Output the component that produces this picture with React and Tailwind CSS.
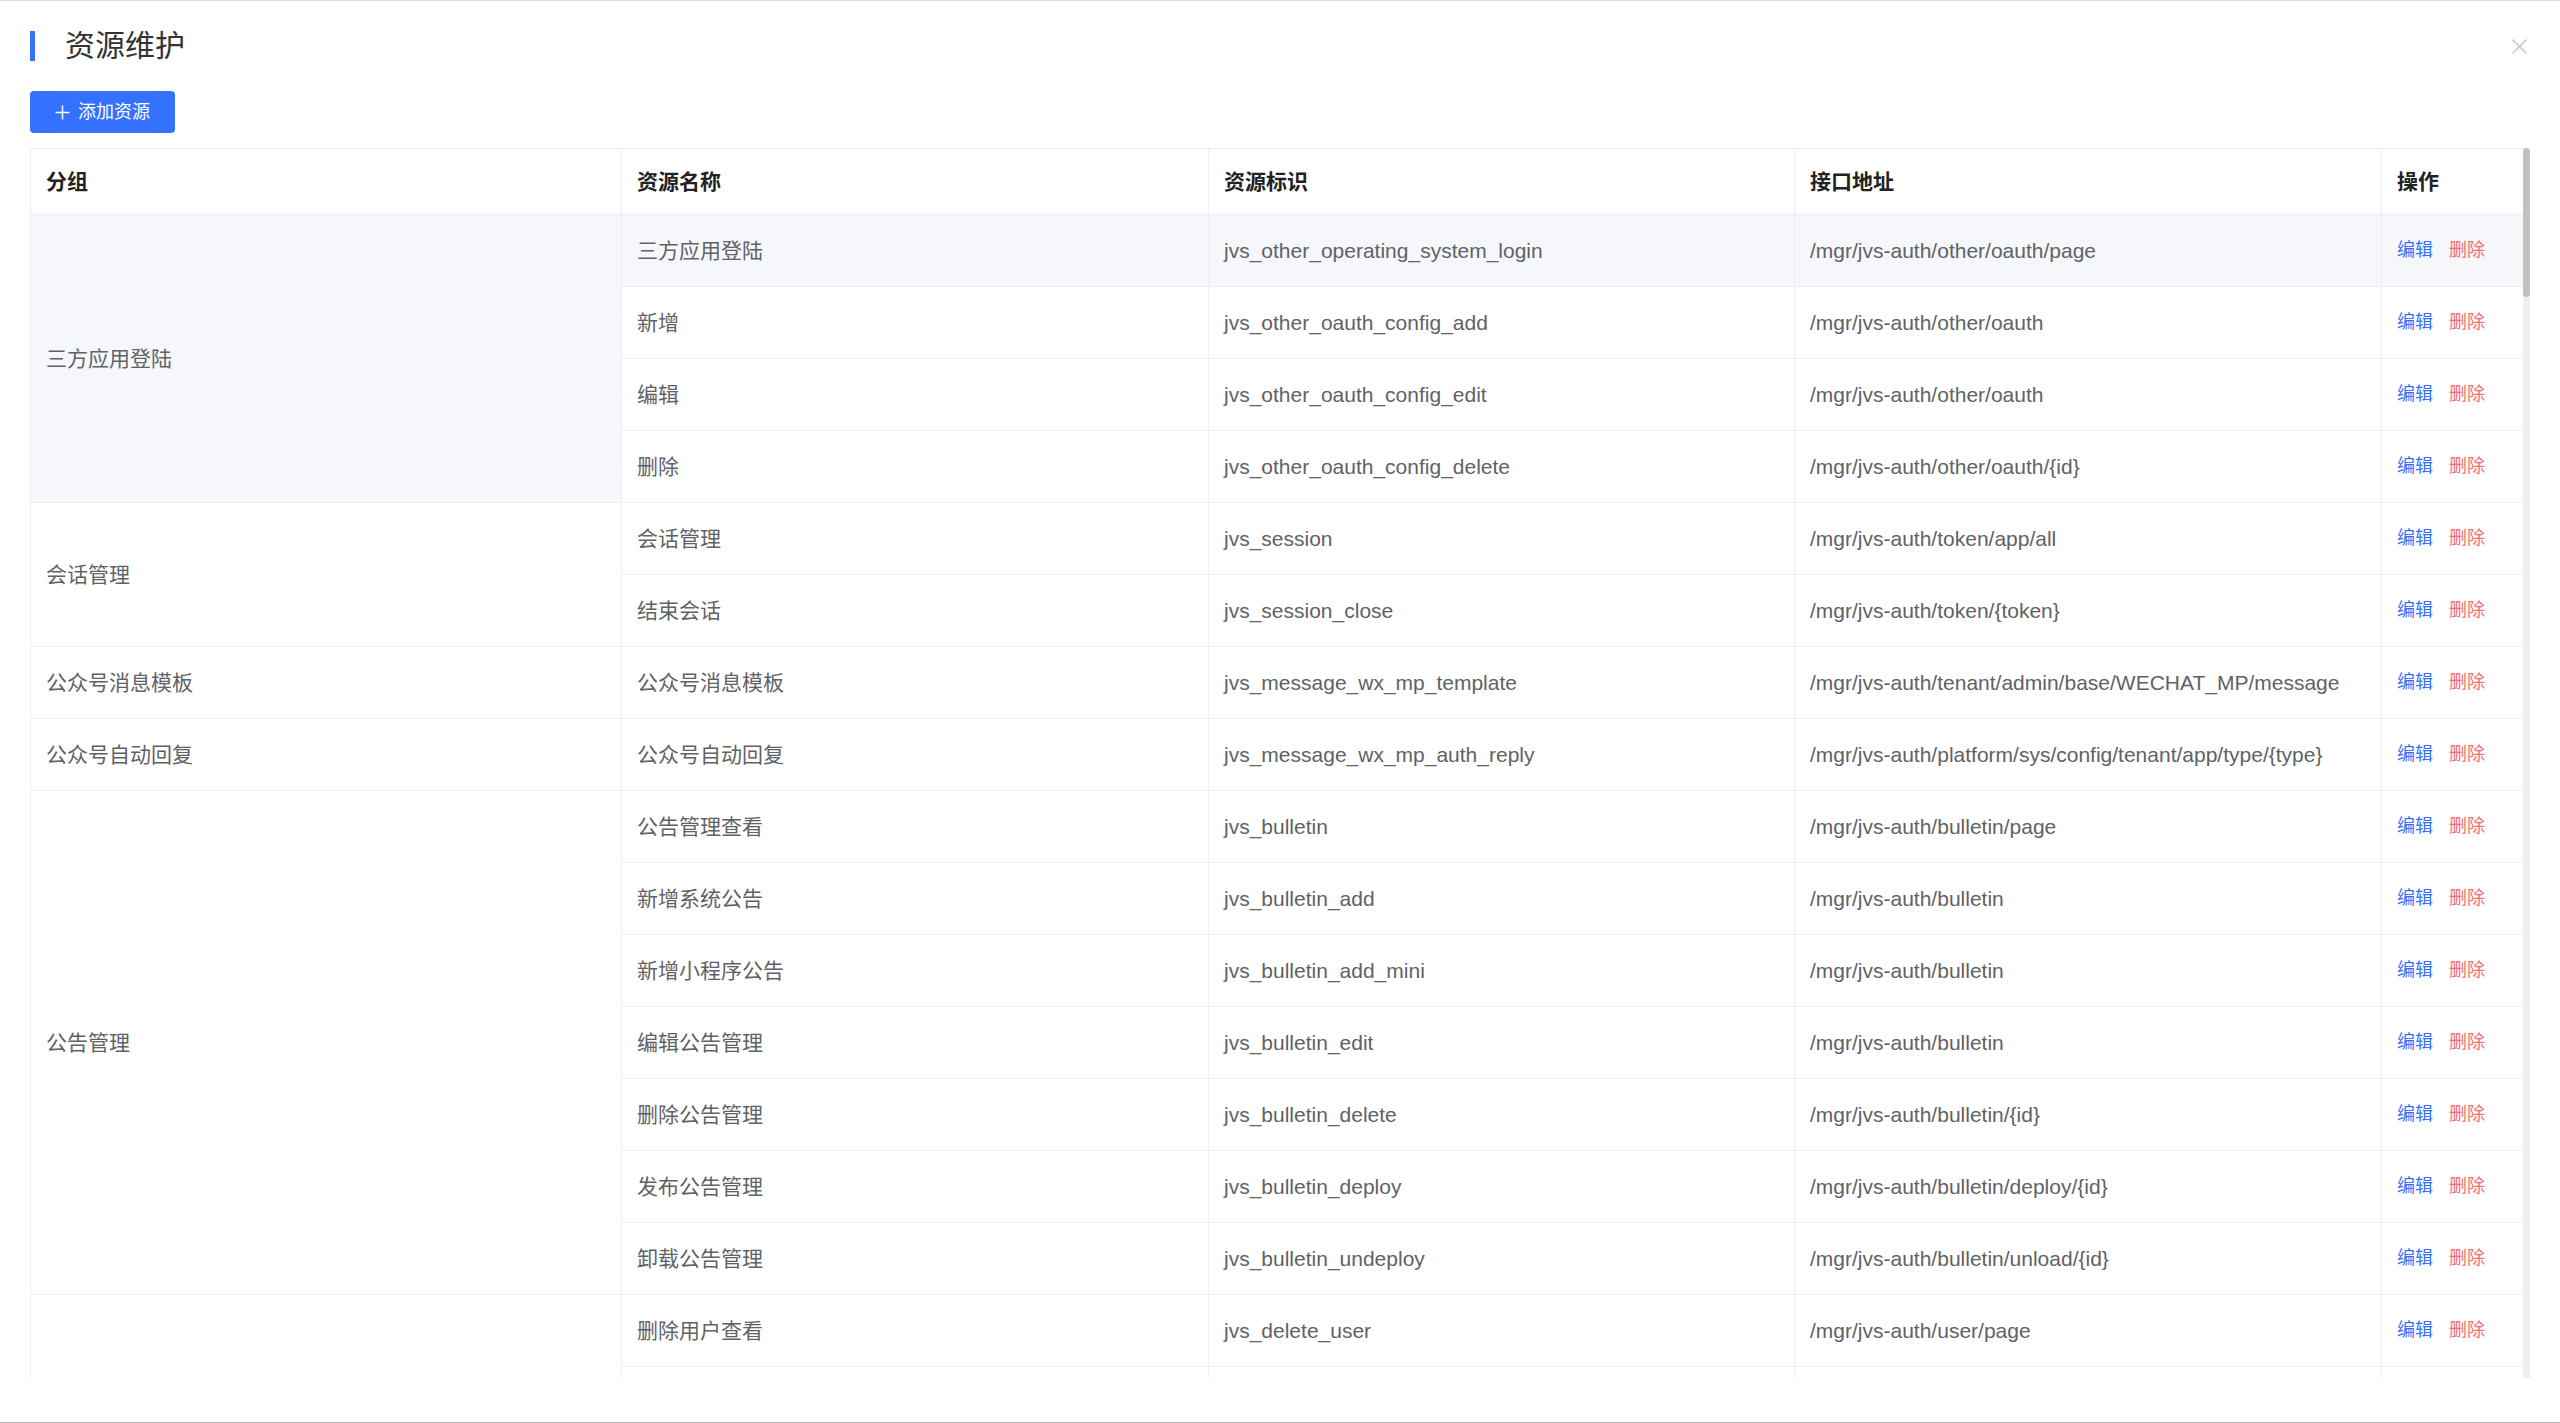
import React from "react";

const groups = [
  {
    name: "三方应用登陆",
    active: true,
    rows: [
      ["三方应用登陆", "jvs_other_operating_system_login", "/mgr/jvs-auth/other/oauth/page"],
      ["新增", "jvs_other_oauth_config_add", "/mgr/jvs-auth/other/oauth"],
      ["编辑", "jvs_other_oauth_config_edit", "/mgr/jvs-auth/other/oauth"],
      ["删除", "jvs_other_oauth_config_delete", "/mgr/jvs-auth/other/oauth/{id}"],
    ],
  },
  {
    name: "会话管理",
    rows: [
      ["会话管理", "jvs_session", "/mgr/jvs-auth/token/app/all"],
      ["结束会话", "jvs_session_close", "/mgr/jvs-auth/token/{token}"],
    ],
  },
  {
    name: "公众号消息模板",
    rows: [["公众号消息模板", "jvs_message_wx_mp_template", "/mgr/jvs-auth/tenant/admin/base/WECHAT_MP/message"]],
  },
  {
    name: "公众号自动回复",
    rows: [["公众号自动回复", "jvs_message_wx_mp_auth_reply", "/mgr/jvs-auth/platform/sys/config/tenant/app/type/{type}"]],
  },
  {
    name: "公告管理",
    rows: [
      ["公告管理查看", "jvs_bulletin", "/mgr/jvs-auth/bulletin/page"],
      ["新增系统公告", "jvs_bulletin_add", "/mgr/jvs-auth/bulletin"],
      ["新增小程序公告", "jvs_bulletin_add_mini", "/mgr/jvs-auth/bulletin"],
      ["编辑公告管理", "jvs_bulletin_edit", "/mgr/jvs-auth/bulletin"],
      ["删除公告管理", "jvs_bulletin_delete", "/mgr/jvs-auth/bulletin/{id}"],
      ["发布公告管理", "jvs_bulletin_deploy", "/mgr/jvs-auth/bulletin/deploy/{id}"],
      ["卸载公告管理", "jvs_bulletin_undeploy", "/mgr/jvs-auth/bulletin/unload/{id}"],
    ],
  },
  {
    // the rest of this group lies below the scroll edge
    name: "",
    rows: [
      ["删除用户查看", "jvs_delete_user", "/mgr/jvs-auth/user/page"],
      null,
      null,
    ],
  },
];

const cell = "border-r border-b border-[#ebeef5] pl-[15px] pr-[10px] align-middle whitespace-nowrap overflow-hidden";

const App = () => {
  return (
    <div className="h-[1423px] w-full overflow-hidden bg-white border-t border-t-[#dcdcdc] border-b border-b-[#aab9a3] [font-family:'Liberation_Sans','Noto_Sans_CJK_SC',sans-serif]">
      <div className="px-[30px] pt-[30px]">
        <div className="flex h-[30px] items-center justify-between">
          <div className="flex items-center">
            <div className="h-[30px] w-[5px] bg-[#3471ff]"></div>
            <h1 className="ml-[30px] text-[30px] leading-[30px] text-[#333]">资源维护</h1>
          </div>
          <svg className="mr-[3px] h-[15px] w-[15px]" viewBox="0 0 15 15" fill="none" stroke="#c0c4cc" strokeWidth="1.4">
            <path d="M0.5 0.5L14.5 14.5M14.5 0.5L0.5 14.5" />
          </svg>
        </div>

        <button className="mt-[30px] flex h-[42px] w-[145px] items-center justify-center gap-[8px] rounded-[4px] bg-[#3471ff] text-[18px] text-white">
          <svg className="h-[15px] w-[15px]" viewBox="0 0 15 15" fill="none" stroke="white" strokeWidth="1.5">
            <path d="M7.5 0.5V14.5M0.5 7.5H14.5" />
          </svg>
          添加资源
        </button>

        <div className="mt-[15px] flex h-[1230px]">
          <div className="w-[2494px] overflow-hidden">
            <table className="w-[2494px] table-fixed border-separate border-spacing-0 border-l border-t border-[#ebeef5] text-[21px]">
              <colgroup>
                <col className="w-[591px]" />
                <col className="w-[587px]" />
                <col className="w-[586px]" />
                <col className="w-[587px]" />
                <col className="w-[143px]" />
              </colgroup>
              <thead>
                <tr>
                  {["分组", "资源名称", "资源标识", "接口地址", "操作"].map((h) => (
                    <th key={h} className={`${cell} h-[66px] text-left font-bold text-[#222]`}>
                      {h}
                    </th>
                  ))}
                </tr>
              </thead>
              <tbody>
                {groups.map((g, gi) =>
                  g.rows.map((r, i) => {
                    const hover = g.active && i === 0;
                    return (
                      <tr key={gi + "-" + i} className={hover ? "bg-[#f5f7fa]" : ""}>
                        {i === 0 && (
                          <td rowSpan={g.rows.length} className={`${cell} text-[#606266] ${g.active ? "bg-[#f5f7fa]" : ""}`}>
                            {g.name}
                          </td>
                        )}
                        <td className={`${cell} h-[72px] text-[#606266]`}>{r && r[0]}</td>
                        <td className={`${cell} text-[#606266]`}>{r && r[1]}</td>
                        <td className={`${cell} text-[#606266]`}>{r && r[2]}</td>
                        <td className={`${cell} text-[18px]`}>
                          {r && (
                            <>
                              <span className="text-[#3471ff]">编辑</span>
                              <span className="ml-[16px] text-[#f56c6c]">删除</span>
                            </>
                          )}
                        </td>
                      </tr>
                    );
                  })
                )}
              </tbody>
            </table>
          </div>
          <div className="w-[7px] bg-[#efefef]">
            <div className="h-[149px] w-[7px] rounded-full bg-[#c1c1c1]"></div>
          </div>
        </div>
      </div>
    </div>
  );
};

export default App;
